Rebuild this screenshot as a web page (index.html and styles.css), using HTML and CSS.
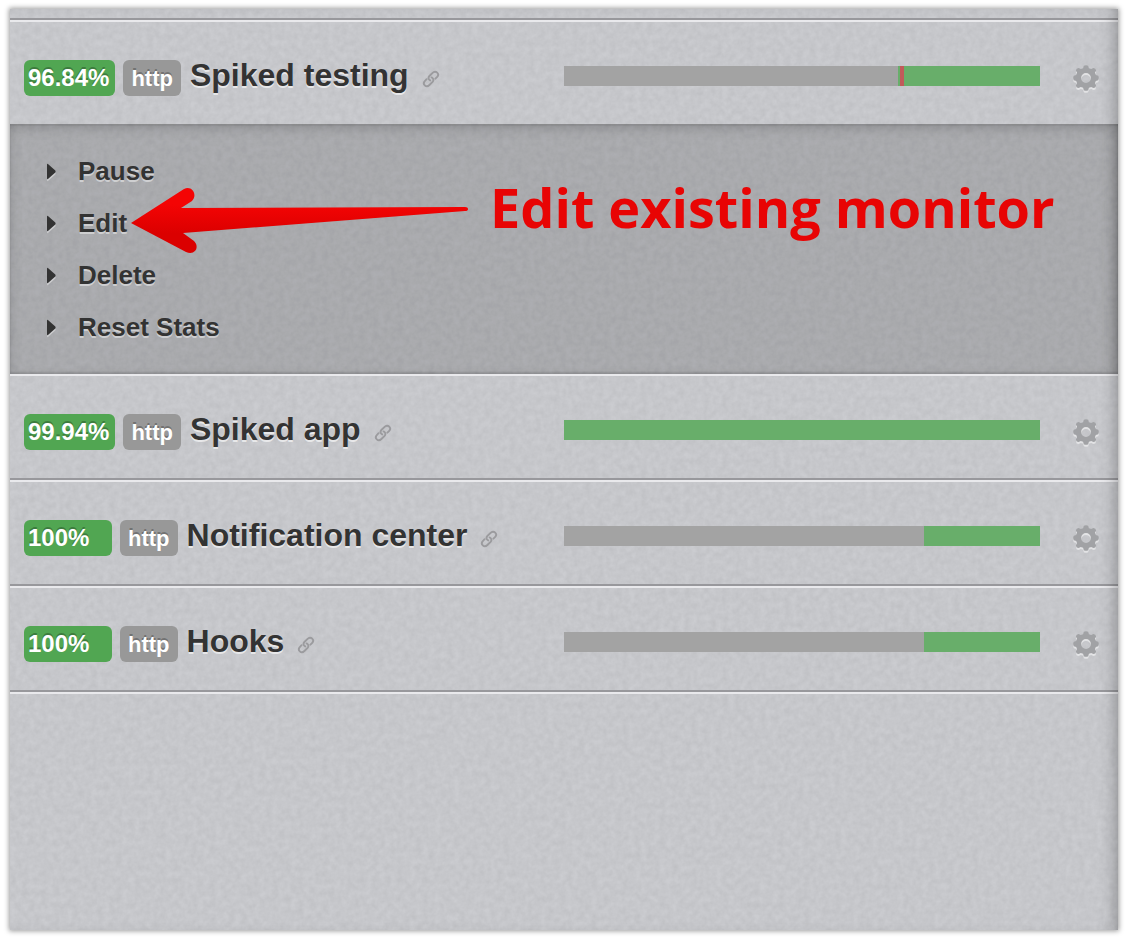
FILE: index.html
```html
<!DOCTYPE html>
<html lang="en">
<head>
<meta charset="utf-8">
<title>Monitors</title>
<link rel="stylesheet" href="styles.css">
</head>
<body>
<svg class="defs" aria-hidden="true">
  <symbol id="gear" viewBox="0 0 26 26">
    <path fill-rule="evenodd" d="M10.8 0.8Q13 -0.4 15.2 0.8L15.9 3.2L18.2 4.1L20.4 2.9Q22.9 3.1 23.1 5.6L21.9 7.8L22.8 10.1L25.2 10.8Q26.4 13 25.2 15.2L22.8 15.9L21.9 18.2L23.1 20.4Q22.9 22.9 20.4 23.1L18.2 21.9L15.9 22.8L15.2 25.2Q13 26.4 10.8 25.2L10.1 22.8L7.8 21.9L5.6 23.1Q3.1 22.9 2.9 20.4L4.1 18.2L3.2 15.9L0.8 15.2Q-0.4 13 0.8 10.8L3.2 10.1L4.1 7.8L2.9 5.6Q3.1 3.1 5.6 2.9L7.8 4.1L10.1 3.2ZM13 8.1A4.9 4.9 0 1 0 13 17.9A4.9 4.9 0 1 0 13 8.1Z"/>
  </symbol>
  <symbol id="link" viewBox="0 0 18 18">
    <g fill="none" stroke="currentColor" stroke-width="1.9" stroke-linecap="round" stroke-linejoin="round">
      <path d="M8.2 10.4C6.2 9.4 6 7.4 7.4 6L10.6 2.8C12 1.4 13.9 1.3 15.2 2.6C16.5 3.9 16.4 5.7 15 7.1L13.4 8.7"/>
      <path d="M9.6 7.4C11.6 8.4 12 10.4 10.6 11.8L7.4 15C6 16.4 4.1 16.6 2.8 15.3C1.5 14 1.6 12.2 3 10.8L4.6 9.2"/>
    </g>
  </symbol>
  <symbol id="caret" viewBox="0 0 9 17"><path d="M0 2Q0 0 1.5 1.4L8.3 7.6Q9 8.5 8.3 9.4L1.5 15.6Q0 17 0 15Z"/></symbol>
</svg>
<main class="panel">
  <svg class="grain" aria-hidden="true">
    <filter id="noise" x="0" y="0" width="100%" height="100%">
      <feTurbulence type="fractalNoise" baseFrequency="0.16" numOctaves="3" seed="4"/>
      <feColorMatrix type="matrix" values="0 0 0 0 0  0 0 0 0 0  0 0 0 0 0  0.08 0 0 0 -0.015"/>
    </filter>
    <rect width="100%" height="100%" filter="url(#noise)"/>
  </svg>
  <div class="edge"></div>
  <section class="monitor">
    <div class="row">
      <div class="info">
        <span class="badge uptime">96.84%</span><span class="badge kind">http</span>
        <h2 class="name">Spiked testing</h2>
        <a class="link" href="#testing" aria-label="Open Spiked testing"><svg><use href="#link"/></svg></a>
      </div>
      <div class="bar"><span class="none" style="width:70.17%"></span><span class="up" style="width:.42%"></span><span class="down" style="width:.84%"></span><span class="up rest"></span></div>
      <button class="gear" aria-label="Spiked testing settings"><svg><use href="#gear"/></svg></button>
    </div>
    <div class="drawer">
      <ul class="menu">
        <li><button><svg><use href="#caret"/></svg>Pause</button></li>
        <li><button><svg><use href="#caret"/></svg>Edit</button></li>
        <li><button><svg><use href="#caret"/></svg>Delete</button></li>
        <li><button><svg><use href="#caret"/></svg>Reset Stats</button></li>
      </ul>
      <svg class="arrow" viewBox="0 0 340 68" aria-hidden="true">
        <defs><linearGradient id="red" x1="0" y1="0" x2="0" y2="1"><stop offset=".25" stop-color="#f40404"/><stop offset=".7" stop-color="#db0000"/></linearGradient></defs>
        <path fill="url(#red)" d="M1 36L54 2C62 -2 68 8 62 14L51 21L335 20Q338 20 338 22Q338 24 335 24L53 46L64 54C70 60 65 69 56 65Z"/>
      </svg>
      <p class="note">Edit existing monitor</p>
    </div>
  </section>
  <section class="monitor">
    <div class="row">
      <div class="info">
        <span class="badge uptime">99.94%</span><span class="badge kind">http</span>
        <h2 class="name">Spiked app</h2>
        <a class="link" href="#app" aria-label="Open Spiked app"><svg><use href="#link"/></svg></a>
      </div>
      <div class="bar"><span class="up rest"></span></div>
      <button class="gear" aria-label="Spiked app settings"><svg><use href="#gear"/></svg></button>
    </div>
  </section>
  <section class="monitor">
    <div class="row">
      <div class="info">
        <span class="badge uptime">100%</span><span class="badge kind">http</span>
        <h2 class="name">Notification center</h2>
        <a class="link" href="#notifications" aria-label="Open Notification center"><svg><use href="#link"/></svg></a>
      </div>
      <div class="bar"><span class="none" style="width:75.63%"></span><span class="up rest"></span></div>
      <button class="gear" aria-label="Notification center settings"><svg><use href="#gear"/></svg></button>
    </div>
  </section>
  <section class="monitor">
    <div class="row">
      <div class="info">
        <span class="badge uptime">100%</span><span class="badge kind">http</span>
        <h2 class="name">Hooks</h2>
        <a class="link" href="#hooks" aria-label="Open Hooks"><svg><use href="#link"/></svg></a>
      </div>
      <div class="bar"><span class="none" style="width:75.63%"></span><span class="up rest"></span></div>
      <button class="gear" aria-label="Hooks settings"><svg><use href="#gear"/></svg></button>
    </div>
  </section>
  <div class="end"></div>
</main>
</body>
</html>
```
FILE: styles.css
```css
* { box-sizing: border-box; }
body {
  margin: 0;
  padding: 9px 10px 10px;
  background: #fff;
  color: #333;
  font-family: "Liberation Sans", Arial, sans-serif;
  font-weight: bold;
}
.defs { position: absolute; width: 0; height: 0; }
.panel {
  position: relative;
  isolation: isolate;
  min-height: calc(100vh - 19px);
  background: #cbccd0;
  box-shadow: 0 0 5px 1px rgba(0,0,0,.4);
}
.panel::after {
  content: "";
  position: absolute;
  inset: 0;
  pointer-events: none;
  box-shadow: inset -12px 0 16px -10px rgba(0,0,0,.3);
}
.grain {
  position: absolute;
  inset: 0;
  z-index: -1;
  width: 100%;
  height: 100%;
}
.edge { height: 11px; border-bottom: 2px solid #98989c; }
.monitor { border-top: 2px solid #e9e9ec; }
.monitor:not(:has(.drawer)) { border-bottom: 2px solid #98989c; }
.end { border-top: 2px solid #e9e9ec; }
.row {
  display: grid;
  grid-template-columns: 50% 1fr 78px;
  height: 102px;
  padding-top: 38px;
}
.info { display: flex; gap: 8px; padding-left: 14px; }
.badge {
  height: 36px;
  border-radius: 6px;
  color: #fff;
  line-height: 36px;
  text-shadow: 0 -2px 0 rgba(0,0,0,.25);
}
.uptime { min-width: 88px; padding: 0 6px 0 4px; background: #51a652; font-size: 24px; }
.kind { padding: 0 8px; background: #989898; font-size: 22px; line-height: 38px; }
.name {
  margin: 0;
  padding-left: 1px;
  font-size: 32px;
  line-height: 30px;
  white-space: nowrap;
  text-shadow: 0 2px 0 rgba(255,255,255,.6);
}
.link { margin: 10px 0 0 5px; height: 18px; color: #9b9b9e; }
.link svg { display: block; width: 18px; height: 18px; }
.bar { display: flex; height: 20px; margin-top: 6px; }
.none { background: #a3a3a3; }
.up { background: #68ae6a; }
.down { background: #c15a5a; }
.rest { flex: 1; }
button {
  padding: 0;
  border: 0;
  background: none;
  color: inherit;
  font: inherit;
  cursor: pointer;
}
.gear { justify-self: end; width: 26px; height: 26px; margin: 5px 19px 0 0; }
.gear svg {
  display: block;
  width: 26px;
  height: 26px;
  fill: #a1a2a5;
  filter: drop-shadow(0 2px 0 rgba(255,255,255,.5));
}
.drawer {
  position: relative;
  padding: 21px 0;
  background: rgba(0,0,0,.145);
  box-shadow: inset 0 4px 14px -2px rgba(0,0,0,.22), inset 0 2px 1px rgba(0,0,0,.06), inset 0 -2px 2px rgba(0,0,0,.12);
}
.menu { margin: 0; padding: 0 0 0 37px; list-style: none; }
.menu button {
  display: flex;
  align-items: center;
  gap: 22px;
  height: 52px;
  font-size: 26px;
  text-shadow: 0 2px 0 rgba(255,255,255,.45);
}
.menu svg {
  width: 9px;
  height: 17px;
  fill: #333;
  filter: drop-shadow(0 2px 0 rgba(255,255,255,.4));
}
.arrow { position: absolute; left: 120px; top: 63px; width: 340px; height: 68px; }
.note {
  position: absolute;
  left: 480px;
  top: 47px;
  margin: 0;
  color: #e80404;
  font-family: "Open Sans", sans-serif;
  font-size: 54px;
  line-height: 72px;
  white-space: nowrap;
}
```
